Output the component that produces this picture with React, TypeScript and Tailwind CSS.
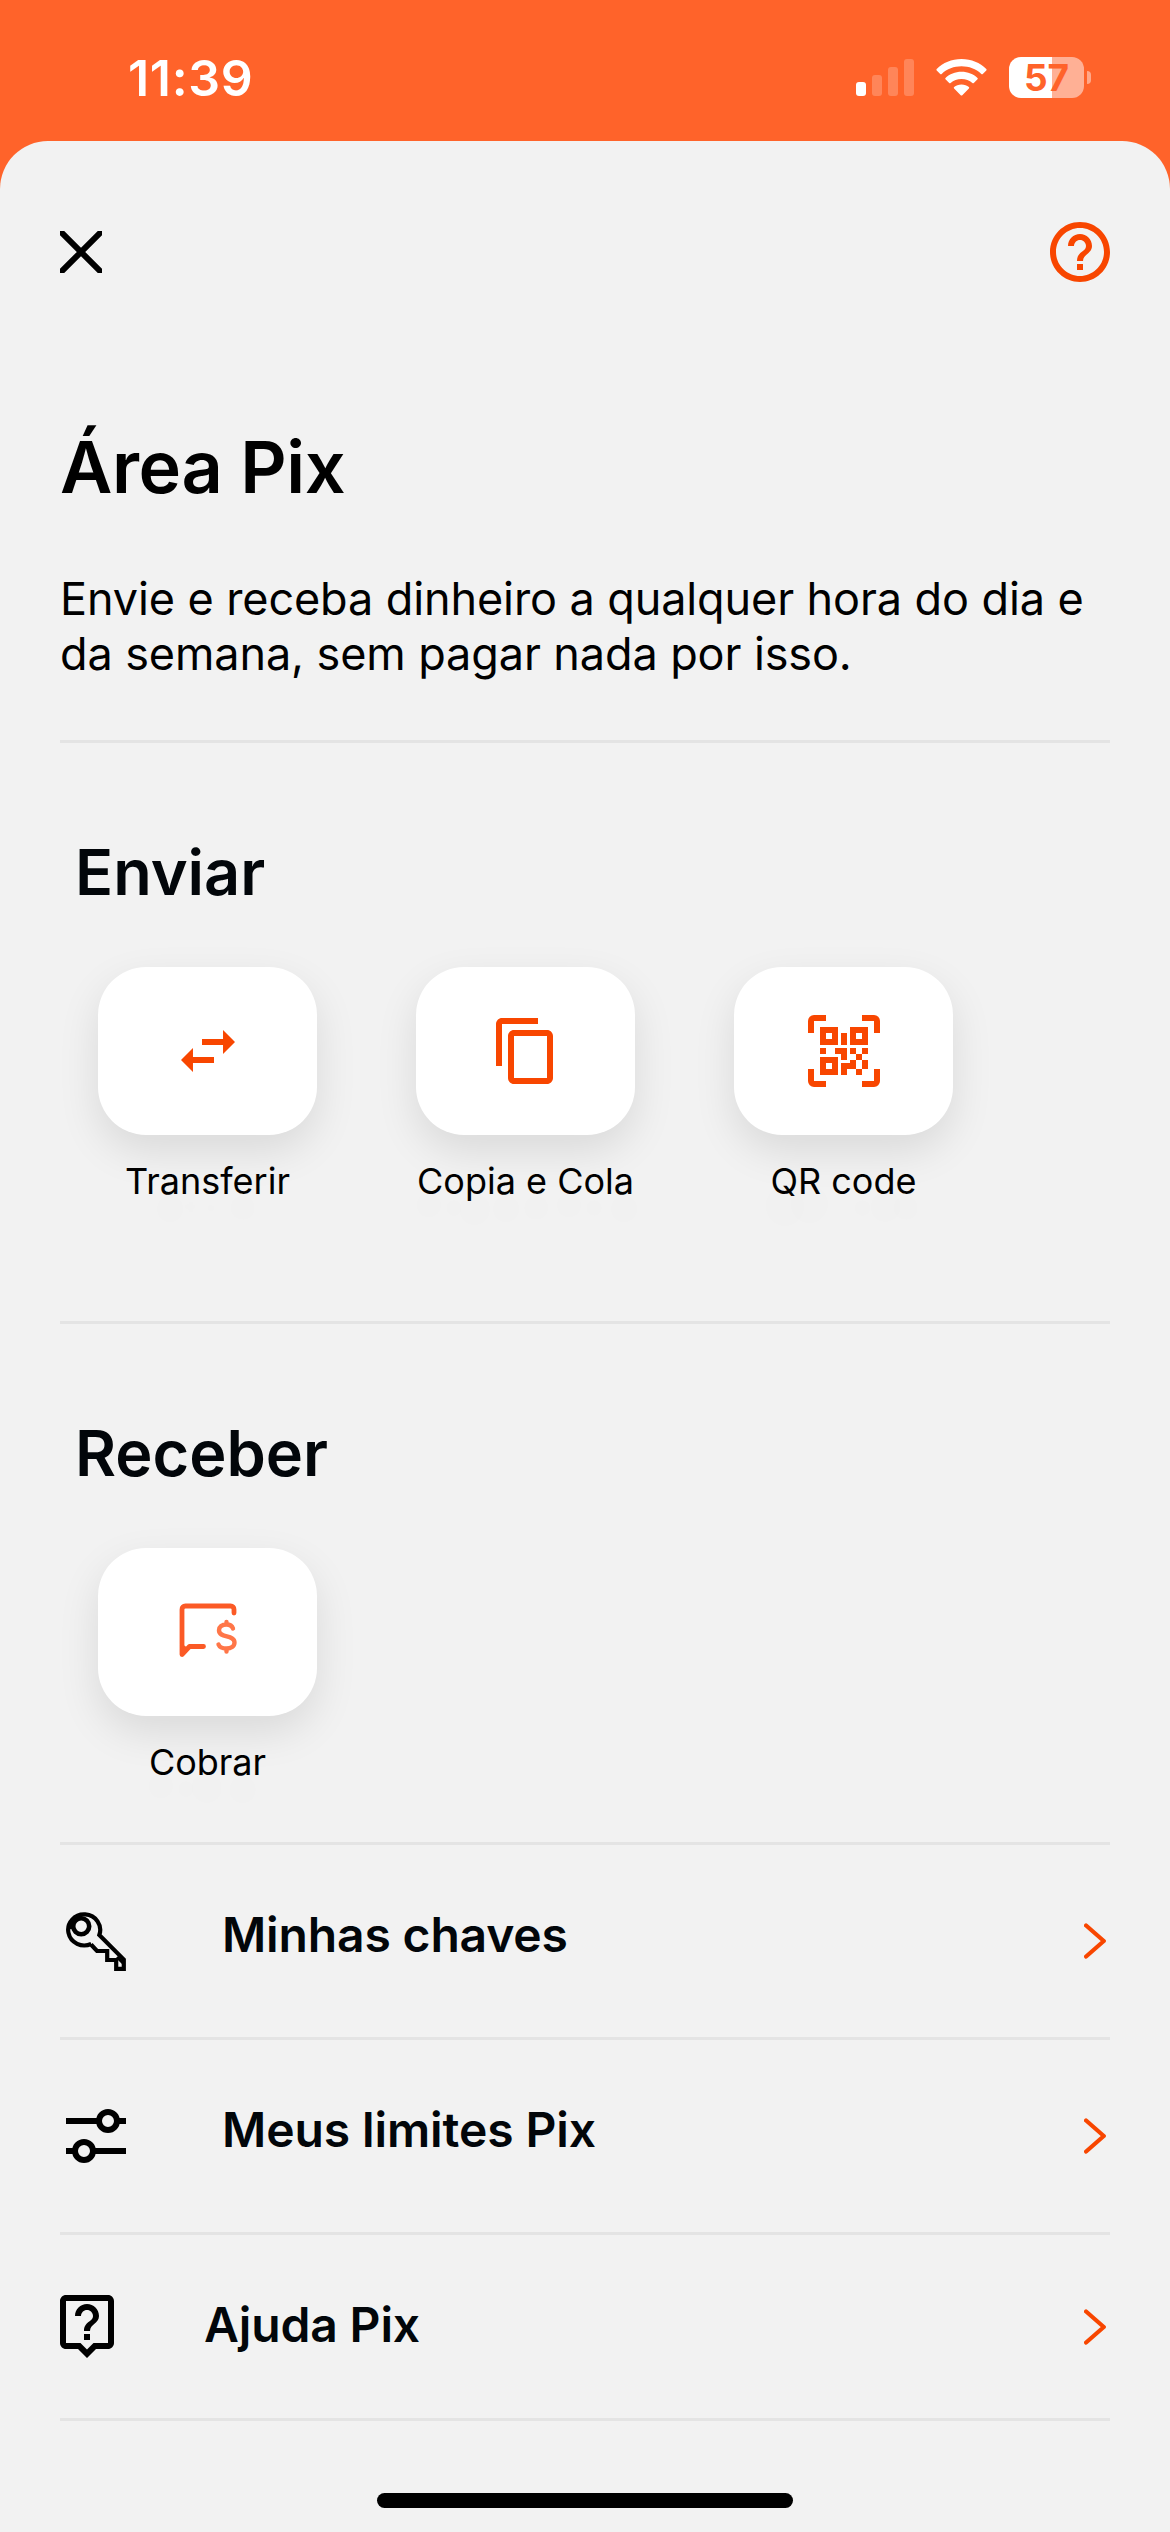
import type { ReactNode } from 'react';

const HELP_CIRCLE =
  'M11 18h2v-2h-2v2zm1-16C6.48 2 2 6.48 2 12s4.48 10 10 10 10-4.48 10-10S17.52 2 12 2zm0 18c-4.41 0-8-3.59-8-8s3.59-8 8-8 8 3.59 8 8-3.59 8-8 8zm0-14c-2.21 0-4 1.79-4 4h2c0-1.1.9-2 2-2s2 .9 2 2c0 2-3 1.75-3 5h2c0-2.25 3-2.5 3-5 0-2.21-1.79-4-4-4z';

function StatusBar() {
  return (
    <header className="flex h-[141px] items-start justify-between pl-[128px] pr-[79px] text-white">
      <span className="mt-[48px] text-[50px] leading-[60px] font-semibold tracking-[0.7px]">11:39</span>
      <div className="mt-[57px] flex h-[41px] items-center">
        <svg className="h-[37px] w-[58px]" viewBox="0 0 58 37" fill="#fff">
          <rect x="0" y="23" width="10" height="14" rx="3" />
          <g opacity="0.22">
            <rect x="16" y="16" width="10" height="21" rx="3" />
            <rect x="32" y="8" width="10" height="29" rx="3" />
            <rect x="48" y="0" width="10" height="37" rx="3" />
          </g>
        </svg>
        <svg className="ml-[22px] h-[37px] w-[51px]" viewBox="0 0 51 37" fill="#fff">
          <path d="M25.500 0 C35.500 0 44 3.700 50.300 10 Q51 10.700 50.300 11.400 L46.800 14.900 Q46.100 15.600 45.300 14.900 C40 10 33 7.300 25.500 7.300 C18 7.300 11 10 5.700 14.900 Q4.900 15.600 4.200 14.900 L0.700 11.400 Q0 10.700 0.700 10 C7 3.700 15.500 0 25.500 0Z" />
          <path d="M25.500 12.700 C31.900 12.700 37.400 15 41.500 18.900 Q42.200 19.600 41.500 20.300 L37.800 24 Q37.100 24.600 36.400 24 C33.500 21.400 29.700 19.900 25.500 19.900 C21.300 19.900 17.500 21.400 14.600 24 Q13.900 24.600 13.200 24 L9.500 20.300 Q8.800 19.600 9.500 18.900 C13.600 15 19.100 12.700 25.500 12.700Z" />
          <path d="M25.500 25.400 C28.400 25.400 31 26.400 32.900 28 Q33.600 28.700 32.900 29.400 L26.300 36.200 Q25.500 37 24.700 36.200 L18.100 29.400 Q17.400 28.700 18.100 28 C20 26.400 22.600 25.400 25.500 25.400Z" />
        </svg>
        <div className="ml-[22px] flex h-[41px] w-[75px] items-center justify-center rounded-[12px] bg-[linear-gradient(to_right,#fff_43px,#ffb095_43px)] text-[37px] leading-[41px] font-bold text-[#ff632a]">
          57
        </div>
        <div className="ml-[3px] h-[13px] w-[4px] rounded-r-[6px] bg-[#ffa88a]" />
      </div>
    </header>
  );
}

function Divider() {
  return <div className="h-[3px] w-full shrink-0 bg-[#e4e4e4]" />;
}

function Tile({ label, children }: { label: string; children: ReactNode }) {
  return (
    <button className="flex w-[219px] flex-col items-center">
      <span className="flex h-[168px] w-[219px] items-center justify-center rounded-[48px] bg-white shadow-[0_16px_42px_rgba(0,0,0,0.1)]">
        {children}
      </span>
      <span className="mt-6 text-[36px] leading-[44px] whitespace-nowrap text-black [text-shadow:0_24px_36px_rgba(0,0,0,0.06)]">
        {label}
      </span>
    </button>
  );
}

function Section({ title, className, children }: { title: string; className: string; children: ReactNode }) {
  return (
    <section className={className}>
      <h2 className="ml-[15px] text-[63px] leading-[76px] font-semibold text-[#02060a]">{title}</h2>
      <div className="mt-[57px] ml-[38px] flex gap-[99px]">{children}</div>
    </section>
  );
}

function Row({ icon, label, className, labelClass }: { icon: ReactNode; label: string; className: string; labelClass: string }) {
  return (
    <button className={className}>
      {icon}
      <span className={labelClass}>{label}</span>
      <svg className="mr-[4px] ml-auto h-[36px] w-[22px]" viewBox="0 0 22 36" fill="none" stroke="#f84600" strokeWidth="4.2" strokeLinecap="round" strokeLinejoin="round">
        <path d="M2.100 2.500L19.800 18L2.100 33.500" />
      </svg>
    </button>
  );
}

function SwapIcon() {
  return (
    <svg className="size-[72px]" viewBox="0 0 24 24" fill="#f84600">
      <path d="M6.990 11L3 15l3.990 4v-3H14v-2H6.990v-3zM21 9l-3.990-4v3H10v2h7.010v3L21 9z" />
    </svg>
  );
}

function CopyIcon() {
  return (
    <svg className="size-[72px]" viewBox="0 0 24 24" fill="#f84600">
      <path d="M16 1H4c-1.100 0-2 .9-2 2v14h2V3h12V1zm3 4H8c-1.100 0-2 .9-2 2v14c0 1.100.9 2 2 2h11c1.100 0 2-.9 2-2V7c0-1.100-.9-2-2-2zm0 16H8V7h11v14z" />
    </svg>
  );
}

function QrIcon() {
  return (
    <svg className="size-[72px]" viewBox="0 0 24 24" fill="#f84600" fillRule="evenodd">
      <path d="M2 0h4v2H2v4H0V2a2 2 0 0 1 2-2zM18 0h4a2 2 0 0 1 2 2v4h-2V2h-4zM0 18h2v4h4v2H2a2 2 0 0 1-2-2zM22 18h2v4a2 2 0 0 1-2 2h-4v-2h4z" />
      <path d="M4 4h6v6H4zM6 6v2h2V6zM14 4h6v6h-6zM16 6v2h2V6zM4 14h6v6H4zM6 16v2h2v-2z" />
      <path d="M11 6h2v4h-2zM4 11h2v2H4zM9 11h4v4h-2v-2H9zM14 11h2v2h-2zM18 11h2v2h-2zM16 13h2v2h-2zM11 16h3v-1h2v3h-3v2h-2zM18 15h2v3h-2zM16 18h2v2h-2z" />
    </svg>
  );
}

function ChargeIcon() {
  return (
    <svg className="mt-[-3px] h-[55px] w-[58px]" viewBox="0 0 58 55" fill="none" strokeLinecap="round" strokeLinejoin="round">
      <path d="M55 10V6.500Q55 3 51.500 3H6.500Q3 3 3 6.500V51.500L10.500 43.500H24.500" stroke="#fb5a26" strokeWidth="4.800" />
      <path d="M3 41V51.500L9 45Z" fill="#fb5a26" />
      <path d="M54 25.500C53 22.700 50 21.500 47.500 21.500C43 21.500 40 23.800 40 27.300C40 35.500 55.500 31.500 55.500 39.500C55.500 43.300 52 45.500 47.500 45.500C43.500 45.500 40.500 44 39.500 41.500M47.500 19V21M47.500 46V48.500" stroke="#ff7648" strokeWidth="4.400" />
    </svg>
  );
}

function KeyIcon() {
  return (
    <svg className="ml-[6px] size-[60px]" viewBox="0 0 60 60" fill="none" stroke="#000" strokeWidth="4.200">
      <path d="M25.300 32.800A16 15.500 0 1 1 33.300 24L57.800 48.500V57.900H50.200V49H41.200V40H31L25 33.500" />
      <circle cx="15.200" cy="15.200" r="8" strokeWidth="4.600" />
      <path d="M5.500 18C4.500 10 8 5.500 16 4.500" strokeWidth="3.500" />
      <path d="M51 46L57 52" strokeWidth="3" />
    </svg>
  );
}

function SlidersIcon() {
  return (
    <svg className="ml-[6px] h-[54px] w-[60px]" viewBox="0 0 60 54" fill="none" stroke="#000" strokeWidth="6">
      <path d="M0 12H33M51 12H60M0 42H9M27 42H60" />
      <circle cx="42" cy="12" r="9" />
      <circle cx="18" cy="42" r="9" />
    </svg>
  );
}

function LiveHelpIcon() {
  return (
    <svg className="h-[63px] w-[54px]" viewBox="3 2 18 21" fill="#000">
      <path d="M19 2H5c-1.110 0-2 .9-2 2v14c0 1.100.89 2 2 2h4l3 3 3-3h4c1.100 0 2-.9 2-2V4c0-1.100-.9-2-2-2zm0 16h-4.830l-.59.59L12 20.170l-1.590-1.590-.58-.58H5V4h14v14zm-8-3h2v2h-2zm1-8c1.100 0 2 .9 2 2 0 2-3 1.750-3 5h2c0-2.250 3-2.500 3-5 0-2.210-1.790-4-4-4s-4 1.790-4 4h2c0-1.100.9-2 2-2z" />
    </svg>
  );
}

export default function App() {
  return (
    <div className="h-[2532px] w-[1170px] overflow-hidden bg-[#ff632a] font-['Inter',sans-serif]">
      <StatusBar />
      <main className="flex h-[2391px] flex-col rounded-t-[48px] bg-[#f2f2f2] px-[60px] pt-[81px]">
        <div className="flex h-[60px] items-center justify-between">
          <svg className="size-[42px]" viewBox="0 0 42 42" stroke="#000" strokeWidth="6">
            <path d="M0 0L42 42M42 0L0 42" />
          </svg>
          <svg className="size-[60px]" viewBox="2 2 20 20" fill="#f84600">
            <path d={HELP_CIRCLE} />
          </svg>
        </div>
        <h1 className="mt-[145px] text-[72px] leading-[80px] font-semibold tracking-[-0.4px] text-black">Área Pix</h1>
        <p className="mt-[64px] mb-[59px] text-[45px] leading-[55px] tracking-[-0.1px] whitespace-nowrap text-black">
          Envie e receba dinheiro a qualquer hora do dia e
          <br />
          da semana, sem pagar nada por isso.
        </p>
        <Divider />
        <Section title="Enviar" className="pt-[91px] pb-[118px]">
          <Tile label="Transferir">
            <SwapIcon />
          </Tile>
          <Tile label="Copia e Cola">
            <CopyIcon />
          </Tile>
          <Tile label="QR code">
            <QrIcon />
          </Tile>
        </Section>
        <Divider />
        <Section title="Receber" className="pt-[91px] pb-[58px]">
          <Tile label="Cobrar">
            <ChargeIcon />
          </Tile>
        </Section>
        <Divider />
        <Row
          icon={<KeyIcon />}
          label="Minhas chaves"
          className="flex h-[192px] items-center"
          labelClass="mb-[13px] ml-[96px] text-[48px] leading-[58px] font-semibold tracking-[-0.15px] text-[#02060a]"
        />
        <Divider />
        <Row
          icon={<SlidersIcon />}
          label="Meus limites Pix"
          className="flex h-[192px] items-center"
          labelClass="mb-[13px] ml-[96px] text-[48px] leading-[58px] font-semibold tracking-[-0.1px] text-[#02060a]"
        />
        <Divider />
        <Row
          icon={<LiveHelpIcon />}
          label="Ajuda Pix"
          className="flex h-[183px] items-center"
          labelClass="mb-[4px] ml-[90px] text-[48px] leading-[58px] font-semibold tracking-[-0.15px] text-[#02060a]"
        />
        <Divider />
        <div className="mt-[72px] h-[15px] w-[416px] shrink-0 self-center rounded-full bg-black" />
      </main>
    </div>
  );
}
